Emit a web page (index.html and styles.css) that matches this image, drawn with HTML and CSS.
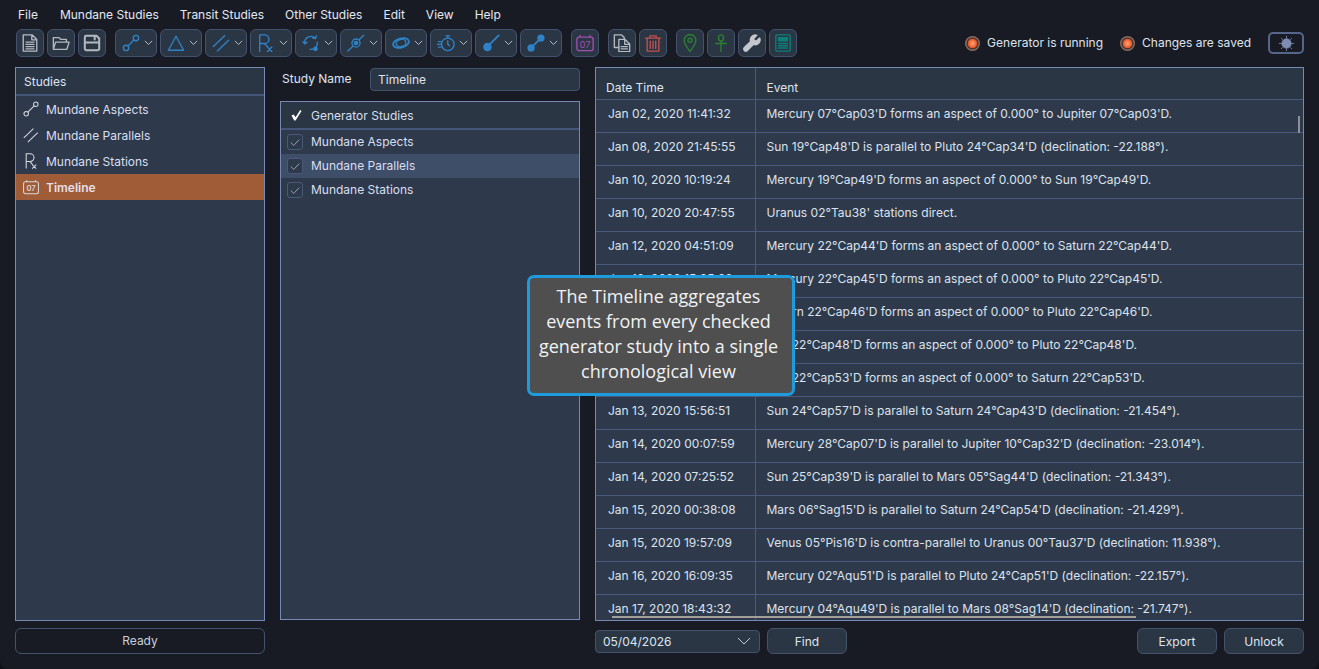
FILE: index.html
```html
<!DOCTYPE html>
<html lang="en">
<head>
<meta charset="utf-8">
<title>Timeline</title>
<link rel="stylesheet" href="styles.css">
</head>
<body>
<div class="app">
  <nav class="menubar">
    <span>File</span><span>Mundane Studies</span><span>Transit Studies</span><span>Other Studies</span><span>Edit</span><span>View</span><span>Help</span>
  </nav>
  <div class="toolbar">
    <div class="group">
      <button class="tb"><svg viewBox="0 0 20 20" class="ic grey"><path d="M2.500 1h10l5 5v13h-15z M12 1v5.500h5.500 M5.500 9h9 M5.500 11.500h9 M5.500 14h9 M5.500 16.500h9" /></svg></button>
      <button class="tb"><svg viewBox="0 0 20 20" class="ic grey"><path d="M1.500 17V4h6.500l1.500 2H16v3 M1.500 17l2.500-8H19l-2.500 8z" /></svg></button>
      <button class="tb"><svg viewBox="0 0 20 20" class="ic grey thick"><path d="M2 3.500a1.500 1.500 0 0 1 1.500-1.500H15l3 3v11.500a1.500 1.500 0 0 1-1.500 1.500h-13A1.500 1.500 0 0 1 2 16.500z M2 9.500h16 M13 2v4"/></svg></button>
    </div>
    <div class="group">
      <button class="tb dd"><svg viewBox="0 0 20 20" class="ic blue"><circle cx="4.500" cy="15.500" r="3"/><circle cx="15.500" cy="4.500" r="3"/><path d="M6.700 13.300l6.600-6.600"/></svg><svg viewBox="0 0 10 6" class="chev"><path d="M1 1l4 4 4-4"/></svg></button>
      <button class="tb dd"><svg viewBox="0 0 20 20" class="ic blue"><path d="M10 2.500L1.500 18h17z"/></svg><svg viewBox="0 0 10 6" class="chev"><path d="M1 1l4 4 4-4"/></svg></button>
      <button class="tb dd"><svg viewBox="0 0 20 20" class="ic blue"><path d="M1.500 14L14 2 M6 19L18.500 7"/></svg><svg viewBox="0 0 10 6" class="chev"><path d="M1 1l4 4 4-4"/></svg></button>
      <button class="tb dd"><svg viewBox="0 0 20 20" class="ic blue"><path d="M3 19.500V1h5.500a4.700 4.700 0 0 1 0 9.500H3 M8 10.500l4 4 M11.500 14.500l5 5 M16.500 14.500l-5 5"/></svg><svg viewBox="0 0 10 6" class="chev"><path d="M1 1l4 4 4-4"/></svg></button>
      <button class="tb dd"><svg viewBox="0 0 20 20" class="ic blue"><path d="M3 11A7 7 0 0 1 15 5 M17 9a7 7 0 0 1-8 8 M3 11L1 8.500 M3 11l2.500-2 M15 5l1-3 M15 5l-3-.5"/><circle class="fill" cx="15" cy="16.500" r="1.800"/></svg><svg viewBox="0 0 10 6" class="chev"><path d="M1 1l4 4 4-4"/></svg></button>
      <button class="tb dd"><svg viewBox="0 0 20 20" class="ic blue"><circle cx="10" cy="10" r="4.500"/><circle class="fill" cx="10" cy="10" r="1.800"/><path d="M1 19L6.500 13.500 M13.500 6.500L18.500 1.500"/></svg><svg viewBox="0 0 10 6" class="chev"><path d="M1 1l4 4 4-4"/></svg></button>
      <button class="tb dd"><svg viewBox="0 0 20 20" class="ic blue"><ellipse cx="10" cy="10" rx="9" ry="5" transform="rotate(-15 10 10)" stroke-width="2"/><ellipse cx="10" cy="10" rx="5.500" ry="4" transform="rotate(-15 10 10)"/></svg><svg viewBox="0 0 10 6" class="chev"><path d="M1 1l4 4 4-4"/></svg></button>
      <button class="tb dd"><svg viewBox="0 0 20 20" class="ic blue"><circle cx="12" cy="11.500" r="7"/><path d="M12 7.500v4l2 1.500 M10 2h4 M12 2v2.500 M1.500 8.500h3 M0.500 11.500h3.500 M1.500 14.500h3"/></svg><svg viewBox="0 0 10 6" class="chev"><path d="M1 1l4 4 4-4"/></svg></button>
      <button class="tb dd"><svg viewBox="0 0 20 20" class="ic blue"><circle class="fill" cx="6" cy="14.500" r="4"/><path d="M8 12L18.500 1.500" stroke-width="2"/></svg><svg viewBox="0 0 10 6" class="chev"><path d="M1 1l4 4 4-4"/></svg></button>
      <button class="tb dd"><svg viewBox="0 0 20 20" class="ic blue"><circle class="fill" cx="4.500" cy="15.500" r="3.300"/><circle class="fill" cx="15.500" cy="4.500" r="3.300"/><path d="M6 14l8-8" stroke-width="2"/></svg><svg viewBox="0 0 10 6" class="chev"><path d="M1 1l4 4 4-4"/></svg></button>
    </div>
    <div class="group">
      <button class="tb"><svg viewBox="0 0 20 20" class="ic purple"><path d="M1 6a2.500 2.500 0 0 1 2.500-2.500h13A2.500 2.500 0 0 1 19 6v10a2.500 2.500 0 0 1-2.500 2.500h-13A2.500 2.500 0 0 1 1 16z M4.500 1.500v2 M15.500 1.500v2"/><text x="10" y="15.500" class="calnum">07</text></svg></button>
    </div>
    <div class="group">
      <button class="tb"><svg viewBox="0 0 20 20" class="ic grey"><path d="M1.500 1h8l3 3v2 M1.500 1V15H6.500"/><path d="M6.500 6h7l5 5v8.500h-12z M13 6v5.500h5.500 M9 14h7 M9 16.500h7"/></svg></button>
      <button class="tb"><svg viewBox="0 0 20 20" class="ic red"><path d="M1.500 4.500h17 M6.500 4.500V2h7v2.500 M3.500 4.500V19h13V4.500 M7 8v8 M10 8v8 M13 8v8"/></svg></button>
    </div>
    <div class="group">
      <button class="tb"><svg viewBox="0 0 20 20" class="ic green"><path d="M10 19.500C6 14 3.500 11 3.500 7a6.500 6.500 0 0 1 13 0c0 4-2.500 7-6.500 12.500z"/><circle cx="10" cy="7" r="2.300"/></svg></button>
      <button class="tb"><svg viewBox="0 0 20 20" class="ic green"><ellipse cx="10" cy="4.500" rx="2.800" ry="3.500"/><path d="M10 8v11.500 M4 10.500h12"/></svg></button>
      <button class="tb"><svg viewBox="0 0 20 20" class="ic silver"><path class="fill" d="M18.500 4.500l-3.500 3.300-2.500-.5-.6-2.400L15.300 1.500a5.300 5.300 0 0 0-6.800 6.700L1.500 15a2.300 2.300 0 0 0 3.300 3.300l6.900-6.800a5.300 5.300 0 0 0 6.800-7z"/></svg></button>
      <button class="tb"><svg viewBox="0 0 20 20" class="ic teal"><rect x="2" y="1" width="16" height="18" rx="1.500"/><path class="fill" d="M5 4h10v3.500H5z"/><path d="M5 10.500h10 M5 13h10 M5 15.500h10"/></svg></button>
    </div>
    <div class="status">
      <span class="led"></span><span class="statxt">Generator is running</span>
      <span class="led second"></span><span class="statxt">Changes are saved</span>
      <button class="theme"><svg viewBox="0 0 20 20" class="sun"><circle cx="10" cy="10" r="5.500"/><path d="M10 1v3 M10 16v3 M1 10h3 M16 10h3 M3.600 3.600l2 2 M14.400 14.400l2 2 M3.600 16.400l2-2 M14.400 5.600l2-2"/></svg></button>
    </div>
  </div>

  <main class="content">
    <section class="col-left">
      <div class="panel studies">
        <div class="panel-head">Studies</div>
        <ul class="study-list">
          <li><svg viewBox="0 0 20 20" class="li-ic"><circle cx="4" cy="16" r="2.800"/><circle cx="16" cy="4" r="2.800"/><path d="M6 14L14 6"/></svg>Mundane Aspects</li>
          <li><svg viewBox="0 0 20 20" class="li-ic"><path d="M1 13.500L13 2 M6 19L18.500 7"/></svg>Mundane Parallels</li>
          <li><svg viewBox="0 0 20 20" class="li-ic"><path d="M4 19.500V1h5a4.700 4.700 0 0 1 0 9.500H4 M8.500 10.500l3.500 4 M11.500 14.500l5 5 M16.500 14.500l-5 5"/></svg>Mundane Stations</li>
          <li class="sel"><svg viewBox="0 0 20 20" class="li-ic"><path d="M0.700 6a2.500 2.500 0 0 1 2.500-2.500h13.600a2.500 2.500 0 0 1 2.500 2.500v10a2.500 2.500 0 0 1-2.500 2.500H3.200A2.500 2.500 0 0 1 .7 16z M4.500 1.500v2 M15.500 1.500v2"/><text x="10" y="15" class="calnum2">07</text></svg>Timeline</li>
        </ul>
      </div>
      <button class="ready">Ready</button>
    </section>

    <section class="col-mid">
      <div class="name-row">
        <label class="name-label">Study Name</label>
        <div class="name-input">Timeline</div>
      </div>
      <div class="panel gen">
        <div class="gen-head"><svg viewBox="0 0 12 12" class="gen-mark"><path d="M0.500 6.500L3 5.500l2 3L10 0.500l1.500 1L5 12H3.500z"/></svg>Generator Studies</div>
        <ul class="gen-list">
          <li><span class="cb"><svg viewBox="0 0 12 10"><path d="M1 5l3.500 3.500L11 1.500"/></svg></span>Mundane Aspects</li>
          <li class="hl"><span class="cb"><svg viewBox="0 0 12 10"><path d="M1 5l3.500 3.500L11 1.500"/></svg></span>Mundane Parallels</li>
          <li><span class="cb"><svg viewBox="0 0 12 10"><path d="M1 5l3.500 3.500L11 1.500"/></svg></span>Mundane Stations</li>
        </ul>
      </div>
    </section>

    <section class="col-right">
      <div class="panel events">
        <table class="ev">
          <thead><tr><th class="d">Date Time</th><th>Event</th></tr></thead>
          <tbody>
            <tr><td class="d">Jan 02, 2020 11:41:32</td><td>Mercury 07°Cap03'D forms an aspect of 0.000° to Jupiter 07°Cap03'D.</td></tr>
            <tr><td class="d">Jan 08, 2020 21:45:55</td><td>Sun 19°Cap48'D is parallel to Pluto 24°Cap34'D (declination: -22.188°).</td></tr>
            <tr><td class="d">Jan 10, 2020 10:19:24</td><td>Mercury 19°Cap49'D forms an aspect of 0.000° to Sun 19°Cap49'D.</td></tr>
            <tr><td class="d">Jan 10, 2020 20:47:55</td><td>Uranus 02°Tau38' stations direct.</td></tr>
            <tr><td class="d">Jan 12, 2020 04:51:09</td><td>Mercury 22°Cap44'D forms an aspect of 0.000° to Saturn 22°Cap44'D.</td></tr>
            <tr><td class="d">Jan 12, 2020 15:25:22</td><td>Mercury 22°Cap45'D forms an aspect of 0.000° to Pluto 22°Cap45'D.</td></tr>
            <tr><td class="d"></td><td>Saturn 22°Cap46'D forms an aspect of 0.000° to Pluto 22°Cap46'D.</td></tr>
            <tr><td class="d"></td><td>Sun 22°Cap48'D forms an aspect of 0.000° to Pluto 22°Cap48'D.</td></tr>
            <tr><td class="d"></td><td>Sun 22°Cap53'D forms an aspect of 0.000° to Saturn 22°Cap53'D.</td></tr>
            <tr><td class="d">Jan 13, 2020 15:56:51</td><td>Sun 24°Cap57'D is parallel to Saturn 24°Cap43'D (declination: -21.454°).</td></tr>
            <tr><td class="d">Jan 14, 2020 00:07:59</td><td>Mercury 28°Cap07'D is parallel to Jupiter 10°Cap32'D (declination: -23.014°).</td></tr>
            <tr><td class="d">Jan 14, 2020 07:25:52</td><td>Sun 25°Cap39'D is parallel to Mars 05°Sag44'D (declination: -21.343°).</td></tr>
            <tr><td class="d">Jan 15, 2020 00:38:08</td><td>Mars 06°Sag15'D is parallel to Saturn 24°Cap54'D (declination: -21.429°).</td></tr>
            <tr><td class="d">Jan 15, 2020 19:57:09</td><td>Venus 05°Pis16'D is contra-parallel to Uranus 00°Tau37'D (declination: 11.938°).</td></tr>
            <tr><td class="d">Jan 16, 2020 16:09:35</td><td>Mercury 02°Aqu51'D is parallel to Pluto 24°Cap51'D (declination: -22.157°).</td></tr>
            <tr><td class="d">Jan 17, 2020 18:43:32</td><td>Mercury 04°Aqu49'D is parallel to Mars 08°Sag14'D (declination: -21.747°).</td></tr>
          </tbody>
        </table>
        <span class="vscroll"></span>
        <span class="hscroll"></span>
      </div>
      <div class="actions">
        <div class="combo">05/04/2026<svg viewBox="0 0 14 8" class="combo-chev"><path d="M1 1l6 6 6-6"/></svg></div>
        <button class="act">Find</button>
        <span class="spring"></span>
        <button class="act">Export</button>
        <button class="act">Unlock</button>
      </div>
    </section>
  </main>

  <div class="tooltip">The Timeline aggregates events from every checked generator study into a single chronological view</div>
</div>
</body>
</html>
```

FILE: styles.css
```css
* { box-sizing: border-box; }
html, body { margin: 0; height: 100%; background: #101218; overflow: hidden; }
body { font-family: Inter, "Liberation Sans", sans-serif; font-size: 12px; color: #dfe5f0; }
button { font: inherit; color: inherit; }
ul { list-style: none; margin: 0; padding: 0; }

.app { position: relative; width: 1319px; height: 669px; background: #181b24; border-radius: 0 0 8px 8px; display: flex; flex-direction: column; }

.menubar { height: 29px; display: flex; align-items: center; gap: 21px; padding: 0 0 1px 18px; color: #e4e9f2; }
.menubar span:first-child { margin-right: 1px; }

.toolbar { height: 28px; display: flex; align-items: center; gap: 9px; padding-left: 16px; }
.group { display: flex; gap: 3px; }
.tb { width: 28px; height: 28px; padding: 0; background: #2b3644; border: 1px solid #45526e; border-radius: 6px; display: flex; align-items: center; justify-content: center; }
.tb.dd { width: 42px; justify-content: flex-start; padding-left: 6px; gap: 4px; }
.ic { width: 18px; height: 18px; fill: none; stroke-width: 1.500; stroke-linejoin: round; stroke-linecap: round; flex: none; }
.ic .fill { fill: currentColor; }
.ic path, .ic circle, .ic rect, .ic ellipse { stroke: currentColor; }
.thick { stroke-width: 2.200; }
.grey { color: #b4b9c0; }
.blue { color: #2f82c6; }
.purple { color: #a14fb0; }
.red { color: #c2504f; }
.green { color: #2a7f30; }
.silver { color: #c4c8cd; }
.teal { color: #0d7f78; }
.calnum { fill: #a14fb0; font-size: 10.500px; text-anchor: middle; stroke: none; }
.chev { width: 9px; height: 5.400px; fill: none; stroke: #c3c9d3; stroke-width: 1; flex: none; }

.status { margin-left: auto; display: flex; align-items: center; padding-right: 15px; }
.statxt { color: #dde3ee; position: relative; top: -1px; }
.led { width: 15px; height: 15px; margin-right: 7px; border-radius: 50%; background: radial-gradient(closest-side, #ffa27a 0, #f4703a 42%, #d34f28 60%, #4a3532 68%, #4a3532 76%, #8a6a5c 84%, #8a6a5c 100%); }
.led.second { margin-left: 17px; }
.theme { width: 36px; height: 22px; margin-left: 17px; padding: 0; background: #181b24; border: 2px solid #56658a; border-radius: 5px; display: flex; align-items: center; justify-content: center; }
.sun { width: 17px; height: 17px; fill: #7f8db5; stroke: #7f8db5; stroke-width: 1; }

.content { flex: 1; display: flex; gap: 15px; padding: 10px 15px 15px 15px; min-height: 0; }
.panel { background: #2e3a4b; border: 1px solid #7689b4; }
.col-left { width: 250px; display: flex; flex-direction: column; }
.studies { height: 554px; }
.panel-head { height: 28px; padding: 0 8px; display: flex; align-items: center; background: #2b3644; border-bottom: 2px solid #46557a; }
.study-list li { height: 26px; display: flex; align-items: center; padding-left: 7px; gap: 7px; color: #d8dff0; }
.study-list li.sel { background: #a05c37; font-weight: 600; color: #e6dfe8; }
.li-ic { width: 16px; height: 16px; fill: none; stroke: #d5d9e0; stroke-width: 1.300; flex: none; }
.calnum2 { fill: #d5d9e0; stroke: none; font-size: 9.500px; text-anchor: middle; }
.ready { margin-top: 7px; height: 26px; background: #181b24; border: 1px solid #45526e; border-radius: 6px; padding: 0 0 1px; color: #c8cedb; }

.col-mid { width: 300px; display: flex; flex-direction: column; }
.name-row { height: 24px; display: flex; align-items: center; }
.name-label { width: 90px; padding-left: 2px; padding-bottom: 1px; color: #dfe5f0; }
.name-input { width: 210px; height: 23px; padding-left: 7px; display: flex; align-items: center; background: #2b3644; border: 1px solid #45526e; border-radius: 4px; color: #dfe5f0; }
.gen { margin-top: 10px; height: 519px; }
.gen-head { height: 28px; display: flex; align-items: center; background: #2b3644; border-bottom: 2px solid #46557a; color: #d8dff0; padding-left: 10px; gap: 9px; }
.gen-mark { width: 11px; height: 12px; fill: #fff; stroke: none; flex: none; }
.gen-list li { height: 24px; display: flex; align-items: center; padding-left: 6px; gap: 8px; padding-bottom: 2px; color: #d8dff0; }
.gen-list li.hl { background: #3e4d68; }
.cb { width: 16px; height: 16px; margin-top: 2px; border: 1px solid #4a587a; border-radius: 3px; background: #2e3a4b; display: flex; align-items: center; justify-content: center; }
.cb svg { width: 10px; height: 9px; fill: none; stroke: #a2a8b2; stroke-width: 1.100; }

.col-right { flex: 1; display: flex; flex-direction: column; min-width: 0; }
.events { position: relative; height: 554px; overflow: hidden; }
.ev { width: 100%; border-collapse: collapse; table-layout: fixed; }
.ev th { height: 31px; padding: 8px 11px 0; background: #2b3644; text-align: left; font-weight: 400; color: #dfe5f0; border-bottom: 1px solid #4a5a7c; }
.ev th.d { width: 159px; padding-left: 10px; border-right: 1px solid #4a5a7c; }
.ev td { height: 33px; padding: 0 11px 4px; border-bottom: 1px solid #4a5a7c; white-space: nowrap; color: #dce2ee; }
.ev td.d { border-right: 1px solid #4a5a7c; padding-left: 12px; }
.vscroll { position: absolute; right: 3px; top: 48px; width: 2px; height: 17px; background: #8d9097; }
.hscroll { position: absolute; left: 16px; top: 548px; width: 524px; height: 2px; background: #a09f98; }

.actions { margin-top: 7px; height: 26px; display: flex; align-items: center; gap: 7px; }
.combo { width: 165px; height: 23px; padding: 0 8px 0 7px; display: flex; align-items: center; justify-content: space-between; background: #2b3644; border: 1px solid #45526e; border-radius: 4px; }
.combo-chev { width: 14px; height: 8px; fill: none; stroke: #c3c9d3; stroke-width: 1; }
.act { width: 80px; height: 26px; padding: 0; background: #2b3644; border: 1px solid #45526e; border-radius: 6px; color: #dfe5f0; }
.spring { flex: 1; }

.tooltip { position: absolute; left: 527px; top: 275px; width: 268px; height: 121px; padding: 6px 10px 6px 5px; background: #4f4f4f; border: 3px solid #1d9bdc; border-radius: 7px; font-family: "Open Sans", "Noto Sans", sans-serif; font-size: 18px; line-height: 25px; text-align: center; color: #f0f2f4; }
```
